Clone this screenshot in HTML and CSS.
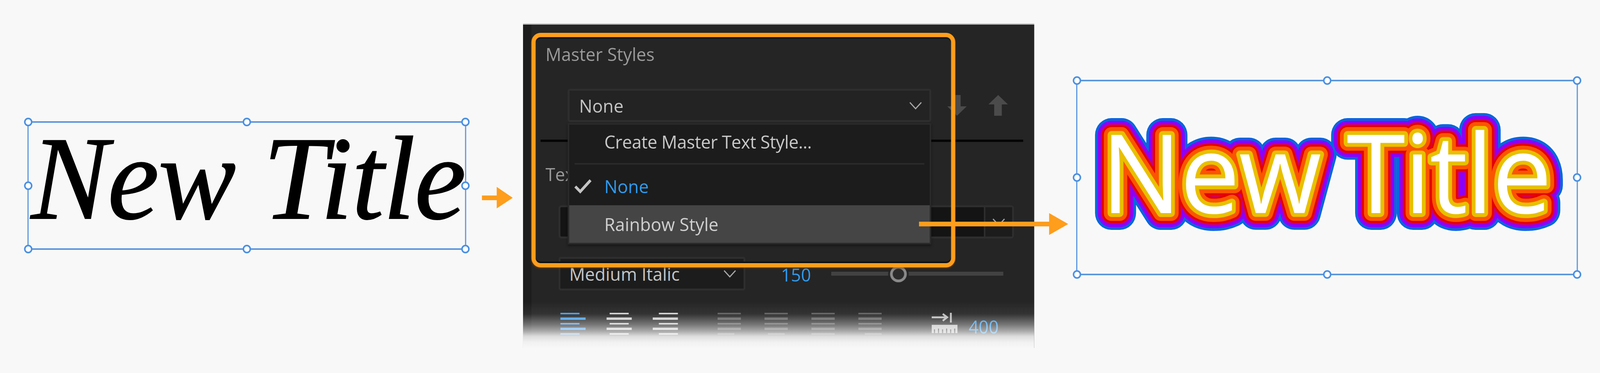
FILE: index.html
```html
<!DOCTYPE html>
<html lang="en">
<head>
<meta charset="utf-8">
<title>Master Styles</title>
<link rel="stylesheet" href="styles.css">
</head>
<body>
<main class="stage">
  <section class="selection selection-left">
    <div class="serif-title">New Title</div>
    <i class="handle tl"></i><i class="handle tc"></i><i class="handle tr"></i>
    <i class="handle ml"></i><i class="handle mr"></i>
    <i class="handle bl"></i><i class="handle bc"></i><i class="handle br"></i>
  </section>

  <section class="panel">
    <h2 class="heading">Master Styles</h2>
    <div class="master-row">
      <div class="select select-master">
        <span>None</span>
        <svg class="chevron" viewBox="0 0 34 20"><path d="M2 2 L17 18 L32 2"/></svg>
      </div>
      <svg class="move move-down" viewBox="0 0 51 53"><path d="M15 0H35V29H51L25.500 53L0 29H15Z"/></svg>
      <svg class="move move-up" viewBox="0 0 51 53"><path d="M15 53H35V24H51L25.500 0L0 24H15Z"/></svg>
    </div>
    <div class="rule"></div>
    <h2 class="heading heading-text">Text</h2>
    <div class="font-field">
      <div class="font-name"></div>
      <div class="font-caret">
        <svg class="chevron" viewBox="0 0 34 20"><path d="M2 2 L17 18 L32 2"/></svg>
      </div>
    </div>
    <div class="style-row">
      <div class="select select-style">
        <span>Medium Italic</span>
        <svg class="chevron" viewBox="0 0 34 20"><path d="M2 2 L17 18 L32 2"/></svg>
      </div>
      <span class="value value-size">150</span>
      <div class="slider"><i class="slider-thumb"></i></div>
    </div>
    <div class="icon-row">
      <div class="align-group">
        <div class="align-icon is-left is-active"><i></i><i></i><i></i><i></i><i></i></div>
        <div class="align-icon is-center"><i></i><i></i><i></i><i></i><i></i></div>
        <div class="align-icon is-right"><i></i><i></i><i></i><i></i><i></i></div>
      </div>
      <div class="justify-group">
        <div class="justify-icon last-left"><i></i><i></i><i></i><i></i><i></i></div>
        <div class="justify-icon last-center"><i></i><i></i><i></i><i></i><i></i></div>
        <div class="justify-icon last-full"><i></i><i></i><i></i><i></i><i></i></div>
        <div class="justify-icon last-right"><i></i><i></i><i></i><i></i><i></i></div>
      </div>
      <svg class="tab-icon" viewBox="0 0 72 56">
        <path class="tab-stroke" d="M0 12H40M30 3L42 12L30 21M52 0V26"/>
        <path class="tab-ruler" d="M0 32H70V54H64V42H61V54H53V44H50V54H42V42H39V54H31V44H28V54H20V42H17V54H9V44H6V54H0Z"/>
      </svg>
      <span class="value value-tab">400</span>
    </div>

    <div class="menu">
      <div class="menu-item menu-create">Create Master Text Style...</div>
      <div class="menu-sep"></div>
      <div class="menu-item menu-selected">
        <svg class="check" viewBox="0 0 46 38"><path d="M3 20L16 33L43 4"/></svg>
        <span>None</span>
      </div>
      <div class="menu-item menu-hover">Rainbow Style</div>
    </div>
    <div class="frame"></div>
    <div class="fade"></div>
  </section>

  <section class="selection selection-right">
    <svg class="rainbow" viewBox="0 0 1309 492">
      <use href="#rainbow-text" class="halo"/>
      <use href="#rainbow-text" class="ring-blue"/>
      <use href="#rainbow-text" class="ring-purple"/>
      <use href="#rainbow-text" class="ring-magenta"/>
      <use href="#rainbow-text" class="ring-red"/>
      <use href="#rainbow-text" class="ring-orange"/>
      <use href="#rainbow-text" class="ring-yellow"/>
      <text id="rainbow-text" class="rainbow-text" x="62" y="337">New Title</text>
    </svg>
    <i class="handle tl"></i><i class="handle tc"></i><i class="handle tr"></i>
    <i class="handle ml"></i><i class="handle mr"></i>
    <i class="handle bl"></i><i class="handle bc"></i><i class="handle br"></i>
  </section>

  <svg class="arrow arrow-short" viewBox="0 0 81 55"><path d="M0 22H39V0L81 28L39 55V34H0Z"/></svg>
  <svg class="arrow arrow-long" viewBox="0 0 391 56"><path d="M0 22H341V0L391 28L341 56V34H0Z"/></svg>
</main>
</body>
</html>
```
FILE: styles.css
```css
* { box-sizing: border-box; }
html, body { margin: 0; height: 100%; background: #f8f8f8; overflow: hidden; }

.stage {
  position: relative;
  display: flex;
  align-items: flex-start;
  width: 4194px;
  height: 954px;
  transform-origin: 0 0;
  font-family: "Open Sans", "Noto Sans", sans-serif;
}

@media (max-width: 4193px) {
  .stage { transform: scaleX(.97663); }
}

/* selection boxes */
.selection {
  position: relative;
  flex: none;
  border-style: solid;
  border-color: #5a96de;
  border-width: 4px 3px;
}
.selection-left { width: 1150px; height: 329px; margin: 310px 0 0 72px; }
.selection-right { width: 1315px; height: 500px; margin: 204px 0 0 110px; }

.handle {
  position: absolute;
  width: 22px;
  height: 22px;
  margin: -11px 0 0 -11px;
  border: 4px solid #4a90e2;
  border-radius: 50%;
  background: #fff;
}
.tl, .ml, .bl { left: -1px; }
.tc, .bc { left: 50%; }
.tr, .mr, .br { left: calc(100% + 1px); }
.tl, .tc, .tr { top: -2px; }
.ml, .mr { top: 50%; }
.bl, .bc, .br { top: calc(100% + 2px); }

.serif-title {
  padding-left: 6px;
  font-family: "Liberation Serif", serif;
  font-style: italic;
  font-size: 305px;
  line-height: 284px;
  letter-spacing: -2.5px;
  white-space: nowrap;
  color: #000;
  -webkit-text-stroke: 2px #000;
}

/* rainbow title */
.rainbow { display: block; width: 100%; height: 100%; overflow: visible; }
.rainbow-text {
  font-family: "Open Sans", sans-serif;
  font-weight: 500;
  font-size: 280px;
  letter-spacing: -3.5px;
  fill: #fff;
}
.rainbow use { stroke-linejoin: round; stroke-linecap: round; }
.halo { stroke: #fff; stroke-width: 94px; opacity: .75; }
.ring-blue { stroke: #0a66dc; stroke-width: 86px; }
.ring-purple { stroke: #8c00fa; stroke-width: 72px; }
.ring-magenta { stroke: #cc0070; stroke-width: 56px; }
.ring-red { stroke: #e30000; stroke-width: 50px; }
.ring-orange { stroke: #fa5500; stroke-width: 40px; }
.ring-yellow { stroke: #e8c000; stroke-width: 20px; }

/* dark panel */
.panel {
  position: relative;
  flex: none;
  width: 1340px;
  height: 830px;
  margin: 60px 0 0 149px;
  border-top: 3px solid #bdbdbd;
  background: linear-gradient(90deg, #1c1c1c 0, #1c1c1c 20px, #252525 24px, #252525 100%);
  font-size: 46px;
  line-height: 60px;
  color: #c4c4c4;
  overflow: hidden;
}
.heading {
  margin: 45px 0 0 59px;
  font-size: 46px;
  font-weight: 400;
  color: #9a9a9a;
}
.heading-text { margin-top: 52px; }

.select {
  display: flex;
  align-items: center;
  justify-content: space-between;
  border: 5px solid #2e2e2e;
  border-radius: 6px;
}
.chevron { flex: none; width: 34px; height: 20px; }
.chevron path { fill: none; stroke: #a8a8a8; stroke-width: 3; }

.master-row { display: flex; align-items: center; margin: 59px 0 0 117px; }
.select-master {
  width: 953px;
  height: 85px;
  padding: 0 19px 0 25px;
  background: #232323;
}
.move { flex: none; width: 51px; height: 53px; fill: #4b4b4b; }
.move-down { margin-left: 42px; }
.move-up { margin-left: 57px; }

.rule { width: 1265px; height: 6px; margin: 45px 0 0 46px; background: #050505; }

.font-field {
  display: flex;
  width: 1194px;
  height: 85px;
  margin: 50px 0 0 93px;
  border: 5px solid #2e2e2e;
  border-radius: 8px;
  background: #141414;
}
.font-name { flex: 1; }
.font-caret {
  display: flex;
  align-items: center;
  justify-content: center;
  width: 74px;
  border-left: 4px solid #2e2e2e;
  background: #1c1c1c;
}

.style-row { display: flex; align-items: center; height: 86px; margin: 47px 0 0 93px; }
.select-style {
  width: 490px;
  height: 86px;
  padding: 0 19px 0 23px;
  background: #1c1c1c;
}
.value { color: #2f9bef; }
.value-size { margin: 4px 0 0 93px; }
.slider {
  position: relative;
  width: 451px;
  height: 10px;
  margin-left: 53px;
  background: #424242;
}
.slider-thumb {
  position: absolute;
  left: 154px;
  top: -15px;
  width: 44px;
  height: 42px;
  border: 7px solid #8a8a8a;
  border-radius: 50%;
  background: #2c2c2c;
  box-shadow: 0 0 0 5px #252525;
}

.icon-row { display: flex; align-items: flex-start; margin: 57px 0 0 98px; }
.align-group { display: flex; gap: 55px; }
.align-icon, .justify-icon {
  display: flex;
  flex-direction: column;
  gap: 8px;
  width: 66px;
}
.align-icon i, .justify-icon i { display: block; height: 4px; background: #cdcdcd; }
.align-icon i:nth-child(even), .justify-icon i:nth-child(even) { height: 6px; }
.align-icon i:nth-child(odd) { width: 50px; }
.is-left { align-items: flex-start; }
.is-center { align-items: center; }
.is-right { align-items: flex-end; }
.align-icon i:nth-child(even) { width: 66px; }
.is-active i { background: #3f9bf0; }

.justify-group { display: flex; gap: 62px; margin-left: 104px; }
.justify-icon { width: 61px; }
.justify-icon i { width: 61px; background: #5c5c5c; }
.justify-icon i:last-child { width: 44px; }
.last-center { align-items: stretch; }
.last-center i:last-child { align-self: center; }
.last-full i:last-child { width: 61px; }
.last-right i:last-child { align-self: flex-end; }

.tab-icon { flex: none; width: 70px; height: 54px; margin-left: 131px; }
.tab-stroke { fill: none; stroke: #bdbdbd; stroke-width: 5; }
.tab-ruler { fill: #c4c4c4; }
.value-tab { margin: 5px 0 0 27px; }

/* dropdown menu */
.menu {
  position: absolute;
  left: 117px;
  top: 252px;
  display: flex;
  flex-direction: column;
  width: 953px;
  height: 310px;
  border: 4px solid #2a2a2a;
  background: #1c1c1c;
  box-shadow: 0 4px 6px rgba(0, 0, 0, .4);
  color: #c8c8c8;
}
.menu-item { display: flex; align-items: center; padding-left: 92px; }
.menu-create { height: 98px; padding-bottom: 12px; letter-spacing: -.5px; }
.menu-sep { height: 4px; margin: 0 14px; background: #2a2a2a; }
.menu-selected { height: 104px; padding: 6px 0 0 13px; color: #2f9bef; }
.check { flex: none; width: 46px; height: 38px; margin-right: 33px; }
.check path { fill: none; stroke: #c4c4c4; stroke-width: 7; }
.menu-hover { flex: 1; background: #454545; color: #cfcfcf; }

/* overlays */
.frame {
  position: absolute;
  left: 22px;
  top: 21px;
  width: 1111px;
  height: 600px;
  border: 11px solid #ff9d1c;
  border-radius: 24px;
  box-shadow: inset 0 4px 0 #10181f, inset 0 -4px 0 #0c1014, 0 3px 4px rgba(120, 70, 10, .6);
}
.fade {
  position: absolute;
  left: 0;
  right: 0;
  bottom: 0;
  height: 120px;
  background: linear-gradient(180deg, rgba(248, 248, 248, 0) 0, rgba(248, 248, 248, .07) 27.5%, rgba(248, 248, 248, .39) 50%, rgba(248, 248, 248, .63) 64%, rgba(248, 248, 248, .87) 75%, rgba(248, 248, 248, .97) 87.5%, #f8f8f8 100%);
}

.arrow { position: absolute; fill: #ff9d1c; }
.arrow-short { left: 1263px; top: 478px; width: 81px; height: 55px; }
.arrow-long { left: 2409px; top: 545px; width: 391px; height: 56px; }
```
